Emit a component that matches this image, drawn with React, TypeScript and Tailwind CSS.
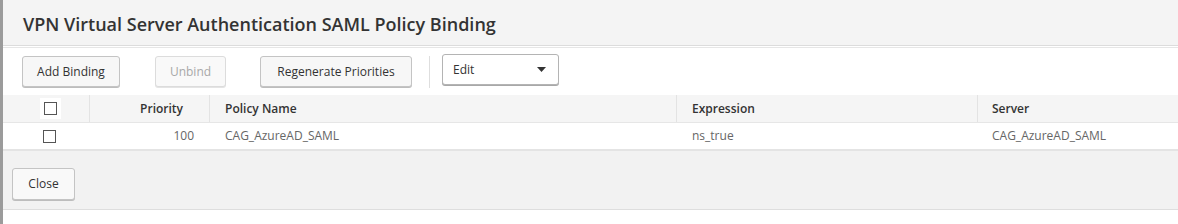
const font = { fontFamily: '"Open Sans", "Liberation Sans", sans-serif' };

function Checkbox() {
  return <span className="block w-[13px] h-[13px] border border-[#555] bg-white" />;
}

function Btn({
  label,
  width,
  disabled,
}: {
  label: string;
  width: string;
  disabled?: boolean;
}) {
  return (
    <button
      className={`${width} h-[31px] rounded-[3px] border text-[12px] flex items-center justify-center ${
        disabled
          ? "border-[#dcdcdc] bg-[#f9f9f9] text-[#a8a8a8] shadow-[0_1px_0_#e4e4e4]"
          : "border-[#c4c4c4] bg-[#f7f7f7] text-[#333] shadow-[0_1px_0_#bdbdbd]"
      }`}
    >
      {label}
    </button>
  );
}

export default function App() {
  return (
    <div
      className="w-[1178px] h-[224px] bg-white border-l-[3px] border-[#9b9b9b] flex flex-col"
      style={font}
    >
      <div className="h-[46px] bg-[#f4f4f4] border-b border-[#dcdcdc] flex items-center pl-[20px] pt-[3px]">
        <h1 className="text-[18px] font-semibold text-[#333]">
          VPN Virtual Server Authentication SAML Policy Binding
        </h1>
      </div>
      <div className="h-px bg-white" />
      <div className="h-[48px] border-t border-[#e6e6e6] flex items-start pl-[19px] pt-[8px]">
        <Btn label="Add Binding" width="w-[98px]" />
        <div className="ml-[35px]">
          <Btn label="Unbind" width="w-[71px]" disabled />
        </div>
        <div className="ml-[34px]">
          <Btn label="Regenerate Priorities" width="w-[152px]" />
        </div>
        <div className="ml-[17px] w-px h-[32px] bg-[#dedede]" />
        <div className="ml-[12px] -mt-[2px] w-[117px] h-[31px] rounded-[3px] border border-[#b4b4b4] bg-white shadow-[0_1px_0_#a8a8a8] flex items-center justify-between pl-[10px] pr-[12px] text-[12px] text-[#333]">
          <span>Edit</span>
          <svg width="9" height="5" viewBox="0 0 9 5">
            <path d="M0 0h9L4.5 5z" fill="#333" />
          </svg>
        </div>
      </div>
      <div className="grid grid-cols-[87px_120px_467px_301px_1fr] h-[28px] bg-[#f5f5f5] border-b border-[#e6e6e6] text-[12px] font-semibold text-[#333]">
        <div className="border-r border-[#e3e3e3] flex items-center pl-[37px]">
          <span className="bg-white p-[4px]">
            <Checkbox />
          </span>
        </div>
        <div className="border-r border-[#e3e3e3] flex items-center justify-end pr-[26px]">
          Priority
        </div>
        <div className="border-r border-[#e3e3e3] flex items-center pl-[15px]">
          Policy Name
        </div>
        <div className="border-r border-[#e3e3e3] flex items-center pl-[15px]">
          Expression
        </div>
        <div className="flex items-center pl-[14px]">Server</div>
      </div>
      <div className="grid grid-cols-[87px_120px_467px_301px_1fr] h-[28px] border-b-2 border-[#e4e4e4] text-[12px] text-[#666]">
        <div className="flex items-center pl-[40px]">
          <Checkbox />
        </div>
        <div className="flex items-center justify-end pr-[16px]">100</div>
        <div className="flex items-center pl-[15px]">CAG_AzureAD_SAML</div>
        <div className="flex items-center pl-[15px]">ns_true</div>
        <div className="flex items-center pl-[14px]">CAG_AzureAD_SAML</div>
      </div>
      <div className="h-[59px] bg-[#f2f2f2] border-b border-[#dedede] pl-[9px] pt-[17px]">
        <button className="w-[63px] h-[32px] rounded-[3px] border border-[#c4c4c4] bg-[#f9f9f9] shadow-[0_1px_0_#bdbdbd] text-[12px] text-[#333]">
          Close
        </button>
      </div>
      <div className="flex-1 bg-white" />
    </div>
  );
}
